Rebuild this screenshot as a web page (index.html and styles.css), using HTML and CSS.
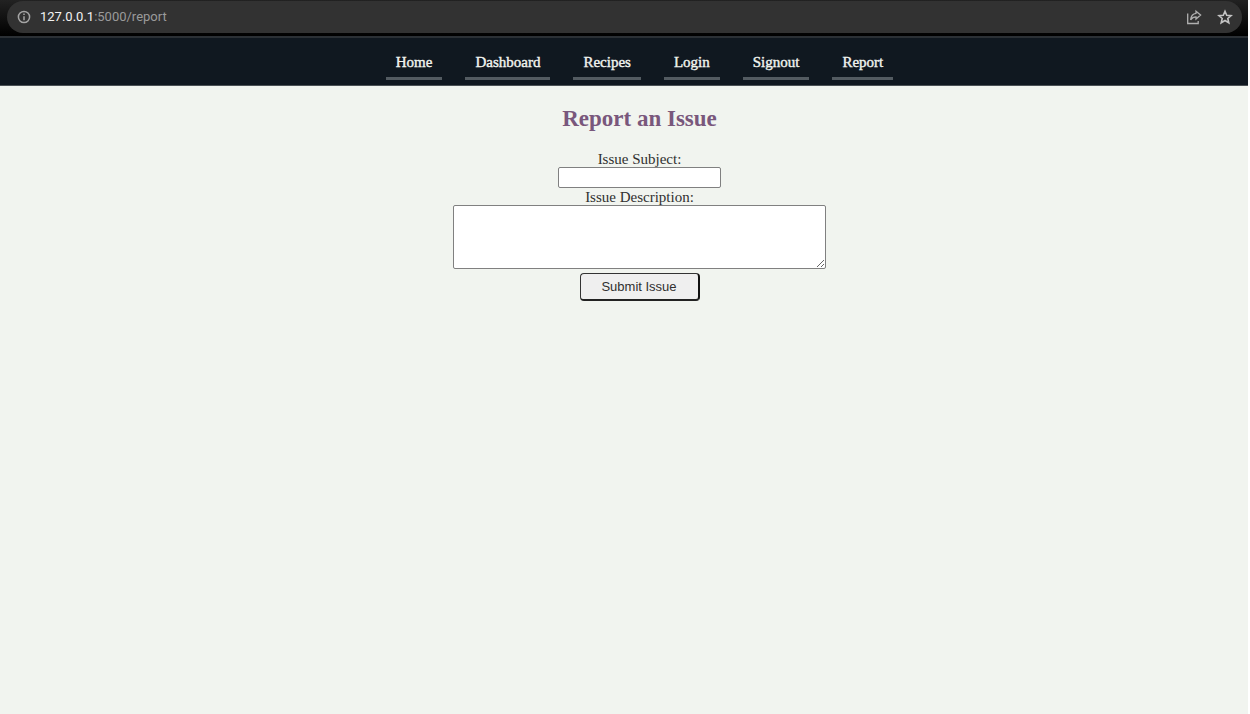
FILE: index.html
```html
<!DOCTYPE html>
<html lang="en">
<head>
<meta charset="utf-8">
<title>Report an Issue</title>
<link rel="stylesheet" href="styles.css">
</head>
<body>
<div class="window">
  <div class="browser-bar">
    <div class="address">
      <svg class="icon" width="14" height="14" viewBox="0 0 14 14" fill="none" stroke="#a5a5a5" stroke-width="1.5" aria-hidden="true"><circle cx="7" cy="7" r="5.6"/><path d="M7 6.2v4M7 3.6v1.5"/></svg>
      <span class="url"><span class="host">127.0.0.1</span>:5000/report</span>
      <button class="tool" aria-label="Share"><svg class="icon" width="16" height="16" viewBox="0 0 16 16" fill="none" stroke="#b0b0b0" stroke-width="1.3" aria-hidden="true"><path d="M1.700 4.500v10h10.500V12"/><path d="M10 2.200l4.600 3.900L10 10V7.800C7.500 7.800 6 8.700 4.600 10.800 5 7.300 6.800 4.700 10 4.300z"/></svg></button>
      <button class="tool" aria-label="Bookmark"><svg class="icon" width="16" height="16" viewBox="0 0 16 16" fill="none" stroke="#c4c4c4" stroke-width="1.6" aria-hidden="true"><path d="M8 2.200l1.700 4 4.400.4-3.300 2.900 1 4.300L8 11.500l-3.800 2.300 1-4.300L1.900 6.600l4.400-.4z"/></svg></button>
    </div>
  </div>
  <nav class="nav">
    <a class="nav-link" href="#">Home</a>
    <a class="nav-link" href="#">Dashboard</a>
    <a class="nav-link" href="#">Recipes</a>
    <a class="nav-link" href="#">Login</a>
    <a class="nav-link" href="#">Signout</a>
    <a class="nav-link" href="#">Report</a>
  </nav>
  <main class="content">
    <h1 class="title">Report an Issue</h1>
    <form class="form">
      <label class="label" for="subject">Issue Subject:</label>
      <input class="field subject" type="text" id="subject">
      <label class="label" for="description">Issue Description:</label>
      <textarea class="field description" id="description"></textarea>
      <button class="submit" type="button">Submit Issue</button>
    </form>
  </main>
</div>
</body>
</html>
```
FILE: styles.css
```css
* {
  box-sizing: border-box;
}

body {
  margin: 0;
  background: #fff;
  font-family: "Liberation Serif", "Times New Roman", serif;
}

.window {
  min-height: 100vh;
  margin-right: 2px;
  background: #f1f4ef;
}

.browser-bar {
  padding: 1px 6px 3px 7px;
  background: linear-gradient(#222, #000);
  border-bottom: 2px solid #2b3035;
}

.address {
  display: flex;
  align-items: center;
  height: 32px;
  padding: 0 9px 0 10px;
  border-radius: 16px;
  background: #323232;
}

.icon {
  display: block;
}

.url {
  flex: 1;
  margin-left: 9px;
  color: #9a9a9a;
  font: 13px/20px Roboto, sans-serif;
}

.host {
  color: #f2f2f2;
}

.tool {
  margin-left: 15px;
  padding: 0;
  border: 0;
  background: none;
}

.nav {
  display: flex;
  justify-content: center;
  gap: 23px;
  padding: 8px 0 5px 31px;
  background: #101820;
  border-bottom: 1px solid #4b5155;
}

.nav-link {
  padding: 8px 10px 6px;
  border-bottom: 3px solid #535b61;
  color: #f1f4ef;
  font-size: 15px;
  line-height: 17px;
  text-decoration: none;
  -webkit-text-stroke: 0.4px #f1f4ef;
}

.content {
  padding: 19px 0 0 31px;
}

.title {
  margin: 0 0 17px;
  color: #79577c;
  font-size: 23px;
  line-height: 28px;
  text-align: center;
}

.form {
  display: flex;
  flex-direction: column;
  align-items: center;
}

.label {
  padding-top: 1px;
  color: #303030;
  font-size: 15px;
  line-height: 16px;
}

.field {
  border: 1px solid #808080;
  border-radius: 2px;
  background: #fff;
}

.subject {
  width: 163px;
  height: 21px;
}

.description {
  width: 373px;
  height: 64px;
}

.submit {
  width: 120px;
  height: 28px;
  margin-top: 4px;
  padding: 0;
  border: 1px solid #333;
  border-right: 2px solid #111;
  border-bottom: 2px solid #222;
  border-radius: 4px;
  background: #efefef;
  color: #303030;
  font: 13px/16px "Liberation Sans", Arial, sans-serif;
}
```
